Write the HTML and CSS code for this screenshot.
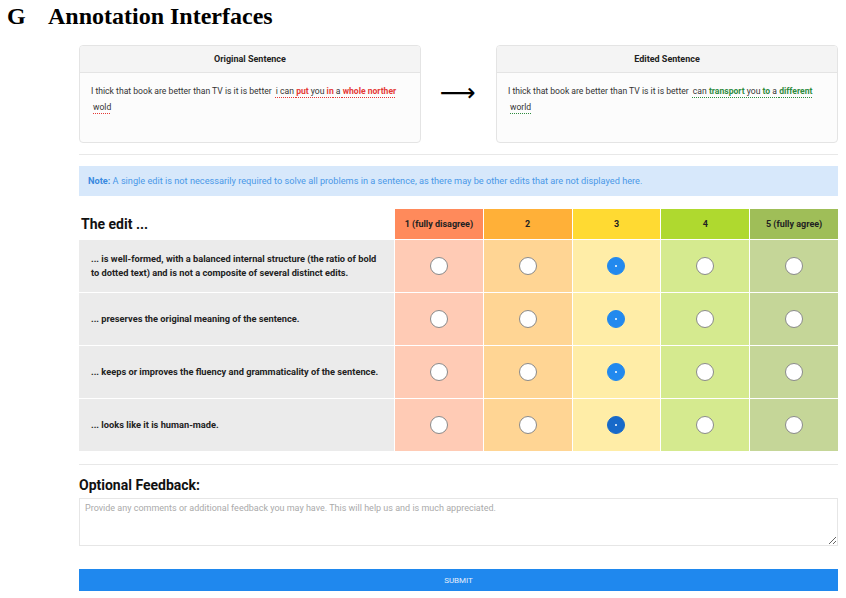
FILE: index.html
```html
<!DOCTYPE html>
<html>
<head>
    <meta charset="UTF-8">
    <meta name="viewport" content="width=device-width, initial-scale=1.0">
    <title>Annotation Interfaces</title>
    <link rel="stylesheet" href="styles.css">
</head>
<body>
    <h1 class="section_title"><span class="section_letter">G</span>Annotation Interfaces</h1>
    <div class="page">
        <div class="sentences">
            <div class="card">
                <div class="card_header">Original Sentence</div>
                <div class="card_body">
                    I thick that book are better than TV is it is better
                    <span class="edit edit_old">i can <b>put</b> you <b>in</b> a <b>whole norther</b></span>
                    <span class="edit edit_old">wold</span>
                </div>
            </div>
            <div class="arrow">&#10230;</div>
            <div class="card">
                <div class="card_header">Edited Sentence</div>
                <div class="card_body">
                    I thick that book are better than TV is it is better
                    <span class="edit edit_new">can <b>transport</b> you <b>to</b> a <b>different</b></span>
                    <span class="edit edit_new">world</span>
                </div>
            </div>
        </div>

        <hr class="divider">

        <div class="note"><b>Note:</b> A single edit is not necessarily required to solve all problems in a sentence, as there may be other edits that are not displayed here.</div>

        <div class="rating">
            <div class="rating_title">The edit ...</div>
            <div class="head c1">1 (fully disagree)</div>
            <div class="head c2">2</div>
            <div class="head c3">3</div>
            <div class="head c4">4</div>
            <div class="head c5">5 (fully agree)</div>

            <div class="question">... is well-formed, with a balanced internal structure (the ratio of bold to dotted text) and is not a composite of several distinct edits.</div>
            <div class="cell c1"><input type="radio" name="q1"></div>
            <div class="cell c2"><input type="radio" name="q1"></div>
            <div class="cell c3"><input type="radio" name="q1" checked></div>
            <div class="cell c4"><input type="radio" name="q1"></div>
            <div class="cell c5"><input type="radio" name="q1"></div>

            <div class="question">... preserves the original meaning of the sentence.</div>
            <div class="cell c1"><input type="radio" name="q2"></div>
            <div class="cell c2"><input type="radio" name="q2"></div>
            <div class="cell c3"><input type="radio" name="q2" checked></div>
            <div class="cell c4"><input type="radio" name="q2"></div>
            <div class="cell c5"><input type="radio" name="q2"></div>

            <div class="question">... keeps or improves the fluency and grammaticality of the sentence.</div>
            <div class="cell c1"><input type="radio" name="q3"></div>
            <div class="cell c2"><input type="radio" name="q3"></div>
            <div class="cell c3"><input type="radio" name="q3" checked></div>
            <div class="cell c4"><input type="radio" name="q3"></div>
            <div class="cell c5"><input type="radio" name="q3"></div>

            <div class="question">... looks like it is human-made.</div>
            <div class="cell c1"><input type="radio" name="q4"></div>
            <div class="cell c2"><input type="radio" name="q4"></div>
            <div class="cell c3"><input type="radio" name="q4" class="focused" checked></div>
            <div class="cell c4"><input type="radio" name="q4"></div>
            <div class="cell c5"><input type="radio" name="q4"></div>
        </div>

        <hr class="divider">

        <h2 class="feedback_title">Optional Feedback:</h2>
        <textarea class="feedback" placeholder="Provide any comments or additional feedback you may have. This will help us and is much appreciated."></textarea>

        <button class="submit">SUBMIT</button>
    </div>
</body>
</html>
```

FILE: styles.css
```css
body {
    margin: 0;
    padding: 0;
    background-color: #ffffff;
    font-family: Roboto, "Noto Sans", sans-serif;
    color: #222;
}

.section_title {
    font-family: "Liberation Serif", serif;
    font-size: 24px;
    font-weight: bold;
    margin: 3px 0 0 7px;
    line-height: 26px;
    color: #000;
}

.section_letter {
    display: inline-block;
    width: 41px;
}

.page {
    width: 759px;
    margin-left: 79px;
}

/* sentences */

.sentences {
    display: flex;
    justify-content: space-between;
    align-items: center;
    margin-top: 16px;
}

.card {
    width: 340px;
    height: 96px;
    border: 1px solid #e4e4e4;
    border-radius: 4px;
    background-color: #fcfcfc;
    overflow: hidden;
}

.card_header {
    height: 26px;
    line-height: 26px;
    text-align: center;
    font-size: 9px;
    font-weight: bold;
    background-color: #f4f4f4;
    border-bottom: 1px solid #e4e4e4;
    color: #222;
}

.card_body {
    padding: 10px 10px 7px 11px;
    font-size: 8.6px;
    line-height: 16px;
    color: #333;
}

.edit {
    padding-left: 2px;
    text-decoration: underline dotted;
    text-decoration-thickness: 1px;
    text-underline-offset: 3px;
}

.edit b {
    font-weight: bold;
}

.edit_old {
    text-decoration-color: #e53935;
}

.edit_old b {
    color: #e53935;
}

.edit_new {
    text-decoration-color: #2e8b3e;
}

.edit_new b {
    color: #2e8b3e;
}

.arrow {
    font-family: "DejaVu Sans", sans-serif;
    font-size: 25px;
    line-height: 20px;
    color: #000;
    margin-top: -2px;
    margin-right: 2px;
}

.divider {
    border: none;
    border-top: 1px solid #e8e8e8;
    margin: 11px 0 11px 0;
}

/* note */

.note {
    background-color: #d7e8fb;
    color: #4a98e8;
    font-size: 9.2px;
    height: 30px;
    line-height: 30px;
    padding-left: 9px;
}

.note b {
    color: #3a8ae0;
}

/* rating table */

.rating {
    display: grid;
    grid-template-columns: 315px repeat(5, 1fr);
    grid-template-rows: 30px repeat(4, 52px);
    column-gap: 1px;
    row-gap: 1px;
    margin-top: 13px;
    margin-bottom: 13px;
}

.rating_title {
    font-size: 14px;
    font-weight: bold;
    color: #111;
    display: flex;
    align-items: center;
    padding-left: 2px;
}

.head {
    font-size: 9px;
    font-weight: bold;
    color: #222;
    display: flex;
    align-items: center;
    justify-content: center;
}

.question {
    background-color: #ebebeb;
    font-size: 9.25px;
    font-weight: bold;
    line-height: 14px;
    color: #222;
    display: flex;
    align-items: center;
    padding: 0 12px 0 12px;
}

.cell {
    display: flex;
    align-items: center;
    justify-content: center;
}

.head.c1 { background-color: #ff8a5b; }
.head.c2 { background-color: #ffb038; }
.head.c3 { background-color: #ffda32; }
.head.c4 { background-color: #afd92f; }
.head.c5 { background-color: #9fbe58; }

.cell.c1 { background-color: #ffcbb5; }
.cell.c2 { background-color: #ffd594; }
.cell.c3 { background-color: #ffeda7; }
.cell.c4 { background-color: #d5ea8f; }
.cell.c5 { background-color: #c5d698; }

.cell input {
    appearance: none;
    -webkit-appearance: none;
    width: 18px;
    height: 18px;
    margin: 0;
    border: 1px solid #8a8a8a;
    border-radius: 50%;
    background-color: #fff;
    position: relative;
}

.cell input:checked {
    border-color: #2289ee;
    background-color: #2289ee;
}

.cell input:checked::after {
    content: "";
    position: absolute;
    left: 7px;
    top: 7px;
    width: 2px;
    height: 2px;
    border-radius: 50%;
    background-color: #fff;
}

.cell input.focused {
    border-color: #1769c9;
    background-color: #1769c9;
}

/* feedback */

.feedback_title {
    font-size: 14px;
    font-weight: bold;
    color: #111;
    margin: 12px 0 5px 0;
    line-height: 16px;
}

.feedback {
    display: block;
    box-sizing: border-box;
    width: 759px;
    height: 48px;
    border: 1px solid #e6e6e6;
    padding: 4px 5px;
    font-family: Roboto, "Noto Sans", sans-serif;
    font-size: 9px;
    resize: vertical;
}

.feedback::placeholder {
    color: #aaa;
}

.submit {
    display: block;
    width: 759px;
    height: 22px;
    margin-top: 23px;
    border: none;
    background-color: #1f88ee;
    color: #e2eefc;
    font-family: Roboto, "Noto Sans", sans-serif;
    font-size: 8px;
}
```
